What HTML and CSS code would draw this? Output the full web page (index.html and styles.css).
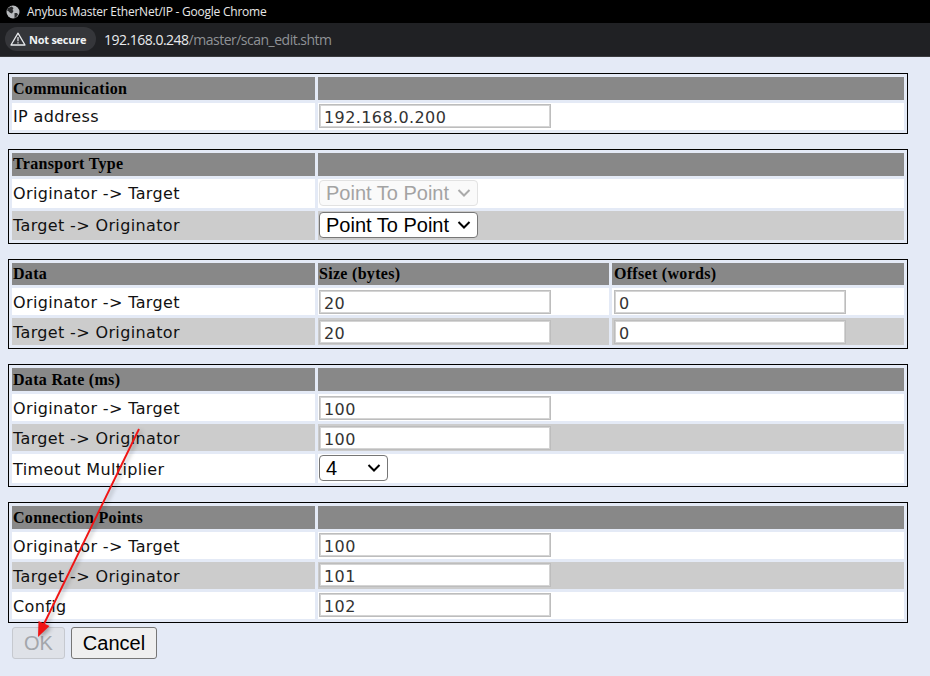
FILE: index.html
```html
<!DOCTYPE html>
<html lang="en">
<head>
<meta charset="utf-8">
<title>Anybus Master EtherNet/IP - Google Chrome</title>
<link rel="stylesheet" href="styles.css">
</head>
<body>
<header class="titlebar">
  <svg class="globe" width="14" height="14" viewBox="0 0 14 14"><circle cx="7" cy="7" r="6.5" fill="#b9bbbe"/><path d="M2 3.2 5.5 1.5 7.5 3 6.5 5 7.5 6 6 8.5 4 7.8 2.2 6 1 5.5ZM8.5 8 11 8 12 9.5 10 12.5 8.5 13Z" fill="#2a2b2d"/></svg>
  <span class="title-text">Anybus Master EtherNet/IP - Google Chrome</span>
</header>
<nav class="toolbar">
  <div class="secure-pill">
    <svg width="16" height="14" viewBox="0 0 16 14"><path d="M8 1.2 15 13H1Z" fill="none" stroke="#e8eaed" stroke-width="1.3" stroke-linejoin="round"/><path d="M8 5v4.2M8 10.2v1.3" stroke="#e8eaed" stroke-width="1.2"/></svg>
    <span>Not secure</span>
  </div>
  <div class="url"><span class="host">192.168.0.248</span><span class="path">/master/scan_edit.shtm</span></div>
</nav>
<main class="page">
  <table class="form-table">
    <colgroup><col class="col-label"><col></colgroup>
    <tr class="head"><th>Communication</th><th></th></tr>
    <tr class="plain"><td>IP address</td><td><input class="field" value="192.168.0.200"></td></tr>
  </table>
  <table class="form-table">
    <colgroup><col class="col-label"><col></colgroup>
    <tr class="head"><th class="th-up">Transport Type</th><th></th></tr>
    <tr class="plain"><td>Originator -&gt; Target</td><td><select class="choice choice-wide" disabled><option>Point To Point</option></select></td></tr>
    <tr class="alt"><td>Target -&gt; Originator</td><td><select class="choice choice-wide"><option>Point To Point</option></select></td></tr>
  </table>
  <table class="form-table labels-low inputs-low">
    <colgroup><col class="col-label"><col class="col-mid"><col></colgroup>
    <tr class="head head-short"><th>Data</th><th>Size (bytes)</th><th>Offset (words)</th></tr>
    <tr class="plain"><td>Originator -&gt; Target</td><td><input class="field" value="20"></td><td><input class="field" value="0"></td></tr>
    <tr class="alt"><td>Target -&gt; Originator</td><td><input class="field" value="20"></td><td><input class="field" value="0"></td></tr>
  </table>
  <table class="form-table labels-low inputs-low">
    <colgroup><col class="col-label"><col></colgroup>
    <tr class="head"><th>Data Rate (ms)</th><th></th></tr>
    <tr class="plain"><td>Originator -&gt; Target</td><td><input class="field" value="100"></td></tr>
    <tr class="alt"><td>Target -&gt; Originator</td><td><input class="field" value="100"></td></tr>
    <tr class="plain"><td>Timeout Multiplier</td><td><select class="choice choice-narrow"><option>4</option></select></td></tr>
  </table>
  <table class="form-table form-table-last labels-low">
    <colgroup><col class="col-label"><col></colgroup>
    <tr class="head"><th>Connection Points</th><th></th></tr>
    <tr class="plain"><td>Originator -&gt; Target</td><td><input class="field" value="100"></td></tr>
    <tr class="alt"><td>Target -&gt; Originator</td><td><input class="field" value="101"></td></tr>
    <tr class="plain"><td>Config</td><td><input class="field" value="102"></td></tr>
  </table>
  <div class="actions">
    <button class="btn btn-ok" disabled>OK</button>
    <button class="btn btn-cancel">Cancel</button>
  </div>
</main>
<svg class="annotation" width="930" height="676" viewBox="0 0 930 676">
  <line x1="139" y1="429" x2="43" y2="626" stroke="#f01414" stroke-width="1.9"/>
  <polygon points="38,637 38.5,621 49.5,626" fill="#f01414"/>
</svg>
</body>
</html>
```
FILE: styles.css
```css
* { box-sizing: border-box; }
html, body { margin: 0; padding: 0; }
body {
  position: relative;
  width: 930px;
  height: 676px;
  overflow: hidden;
  background: #e4eaf6;
  font-family: "DejaVu Sans", sans-serif;
  color: #000;
}

.titlebar {
  display: flex;
  align-items: center;
  gap: 7px;
  height: 23px;
  padding-left: 6px;
  background: #000;
  color: #e8e8e8;
}
.title-text { font: 12px "Open Sans", sans-serif; letter-spacing: -0.24px; }

.toolbar {
  display: flex;
  align-items: center;
  gap: 9px;
  height: 34px;
  padding: 0 0 1px 5px;
  background: #202124;
  border-bottom: 1px solid #3a3b3e;
}
.secure-pill {
  display: flex;
  align-items: center;
  gap: 3px;
  width: 91px;
  height: 24px;
  padding-left: 5px;
  border-radius: 12px;
  background: #35363a;
  color: #f1f3f4;
  font: 700 11px "Open Sans", sans-serif;
  letter-spacing: -0.25px;
}
.url { font: 14px "Open Sans", sans-serif; letter-spacing: -0.5px; margin-left: -1px; }
.host { color: #e8eaed; }
.path { color: #8f9296; }

.page { padding: 16px 8px 0; }

.form-table {
  width: 900px;
  table-layout: fixed;
  border: 1px solid #000;
  border-collapse: separate;
  border-spacing: 3px;
  margin-bottom: 15px;
}
.form-table-last { margin-bottom: 4px; }
.col-label { width: 303px; }
.col-mid { width: 291px; }

.form-table th, .form-table td { padding: 0 1px; }
.form-table th:nth-child(3), .form-table td:nth-child(3) { padding-left: 2px; }
.form-table th {
  height: 23px;
  text-align: left;
  font: bold 16px "Liberation Serif", serif;
  letter-spacing: 0.3px;
}
.form-table .th-up { padding-bottom: 2px; }
.head-short th { height: 22px; }
.head th { background: #888; }
.plain td { background: #fff; }
.alt td { background: #ccc; }
.form-table td {
  font-size: 16px;
  letter-spacing: 0.36px;
  height: 27px;
  color: #111;
}
.labels-low td:first-child { padding-top: 2px; }

.field {
  display: block;
  width: 232px;
  height: 24px;
  margin: 1px 0 2px;
  padding: 2px 4px 0;
  border: 1px solid #bdbdbd;
  outline: 1px solid #d4d4d4;
  outline-offset: -2px;
  border-radius: 0;
  background: #fff;
  font: 16px "DejaVu Sans", sans-serif;
  letter-spacing: 0.4px;
  color: #333;
}
.inputs-low .field { margin: 2px 0 1px; }

.choice {
  display: block;
  height: 26px;
  margin: 1px 0 2px;
  padding: 0 0 0 6px;
  border: 1px solid #767676;
  border-radius: 4px;
  appearance: none;
  background: #fff url("data:image/svg+xml,%3Csvg xmlns='http://www.w3.org/2000/svg' width='14' height='10' viewBox='0 0 14 10'%3E%3Cpath d='M1.5 2 7 7.5 12.500 2' fill='none' stroke='%23000' stroke-width='2'/%3E%3C/svg%3E") no-repeat right 6px center;
  font: 20px "Liberation Sans", sans-serif;
  letter-spacing: 0;
  color: #000;
}
.choice:disabled {
  color: #a3a3a3;
  border-color: #e2e2e2;
  background: #fafafa url("data:image/svg+xml,%3Csvg xmlns='http://www.w3.org/2000/svg' width='14' height='10' viewBox='0 0 14 10'%3E%3Cpath d='M1.5 2 7 7.500 12.500 2' fill='none' stroke='%23aaa' stroke-width='2'/%3E%3C/svg%3E") no-repeat right 6px center;
  opacity: 1;
}
.choice-wide { width: 159px; }
.choice-narrow { width: 69px; }

.actions { display: flex; gap: 6px; padding-left: 4px; }
.btn {
  height: 32px;
  padding: 0;
  border-radius: 3px;
  border: 1px solid #767676;
  background: #efefef;
  font: 20px "Liberation Sans", sans-serif;
  color: #000;
}
.btn-ok { width: 53px; color: #a3a6ab; background: #dfe2e8; border-color: #c6c9cf; }
.btn-cancel { width: 86px; }

.annotation {
  position: absolute;
  left: 0;
  top: 0;
  pointer-events: none;
  filter: drop-shadow(2px 2px 2px rgba(0, 0, 0, 0.3));
}
```
